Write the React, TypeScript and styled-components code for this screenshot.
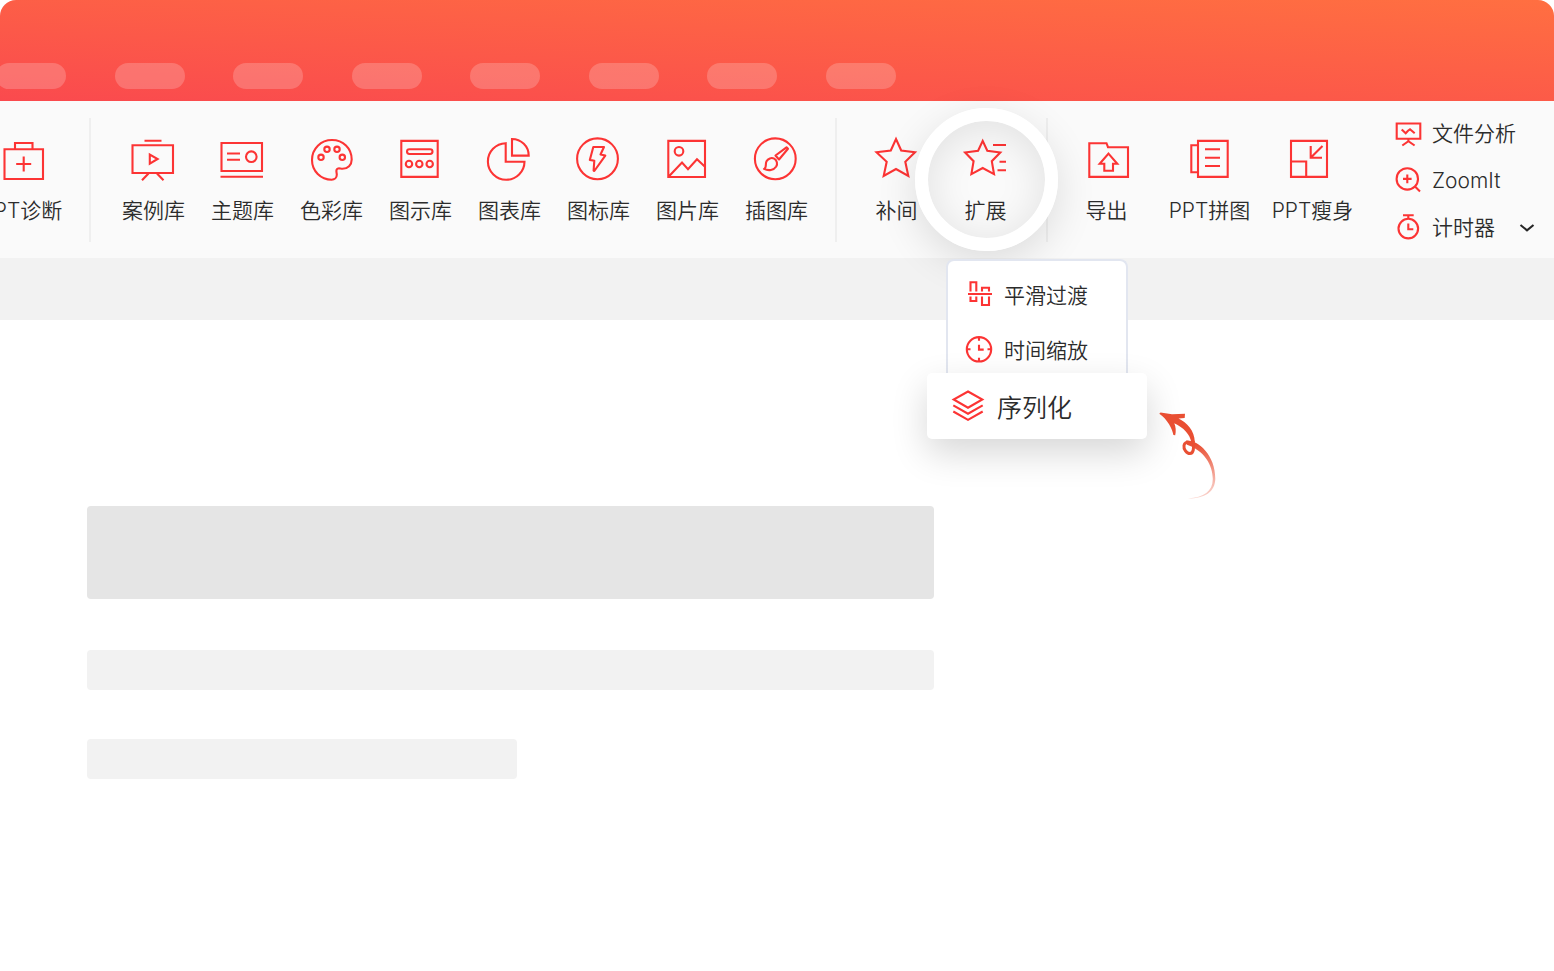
import React from "react";
import styled, { createGlobalStyle } from "styled-components";

const GlobalStyle = createGlobalStyle`
  *, *::before, *::after { box-sizing: border-box; }
  body {
    margin: 0;
    background: #fff;
    color: #2c2c2c;
    font-family: Inter, "Noto Sans CJK SC", sans-serif;
    font-weight: 350;
  }
  button {
    margin: 0;
    padding: 0;
    border: 0;
    background: none;
    color: inherit;
    font: inherit;
    cursor: pointer;
  }
`;

const Page = styled.div`
  min-height: 100vh;
  overflow-x: clip;
`;

const TitleBar = styled.header`
  height: 101px;
  padding-top: 63px;
  border-radius: 16px 16px 0 0;
  overflow: hidden;
  background: linear-gradient(3deg, #fa4a4e, #ff6f41);
`;

const TabStrip = styled.div`
  display: flex;
  justify-content: space-between;
  width: 900px;
  margin-left: -4px;
`;

const TabPill = styled.span`
  width: 70px;
  height: 26px;
  border-radius: 13px;
  background: rgba(255, 255, 255, 0.2);
`;

const Toolbar = styled.nav`
  display: flex;
  align-items: flex-start;
  height: 157px;
  background: #fafafa;
`;

const Group = styled.div<{ $before?: number; $after?: number }>`
  display: flex;
  flex: none;
  margin-left: ${(p) => p.$before ?? 0}px;
  margin-right: ${(p) => p.$after ?? 0}px;
`;

const Divider = styled.div`
  flex: none;
  width: 2px;
  height: 124px;
  margin-top: 17px;
  background: #efefef;
`;

const ToolButton = styled.button<{ $wide?: boolean }>`
  display: flex;
  flex-direction: column;
  align-items: center;
  gap: 13px;
  width: ${(p) => (p.$wide ? 103 : 89)}px;
  padding-top: 34px;
  font-size: 21px;
  line-height: 28px;
  white-space: nowrap;
`;

const Glyph = styled.svg`
  display: block;
  flex: none;
  overflow: visible;
  fill: none;
  stroke: #fc3434;
  stroke-width: 2.1;
`;

const Anchor = styled.div`
  position: relative;
`;

const Spotlight = styled.span`
  position: absolute;
  top: 7px;
  left: -26px;
  width: 143px;
  height: 143px;
  border: 13px solid #fff;
  border-radius: 50%;
  box-shadow: 0 12px 40px rgba(0, 0, 0, 0.12), inset 0 6px 40px rgba(0, 0, 0, 0.1);
  pointer-events: none;
`;

const Menu = styled.div`
  position: absolute;
  z-index: 2;
  top: 158px;
  left: 5px;
  width: 182px;
  padding-top: 5px;
  border: 2px solid #e2e6f0;
  border-bottom: 0;
  border-radius: 8px 8px 0 0;
  background: #fff;
`;

const MenuItem = styled.button`
  display: flex;
  align-items: center;
  gap: 8px;
  width: 100%;
  height: 55px;
  padding-left: 16px;
  font-family: "Noto Sans CJK SC", sans-serif;
  font-size: 21px;
  line-height: 28px;
`;

const ActiveMenuItem = styled(MenuItem)`
  position: relative;
  gap: 12px;
  width: 220px;
  height: 66px;
  margin: -3px -21px 0;
  padding-left: 24px;
  border-radius: 5px;
  background: #fff;
  box-shadow: 0 14px 36px rgba(0, 0, 0, 0.16);
  font-size: 25px;
  line-height: 36px;
`;

const Swirl = styled.svg`
  position: absolute;
  top: 139px;
  left: 202px;
  pointer-events: none;
`;

const SideTools = styled.div`
  flex: none;
  padding-top: 9px;
`;

const SideRow = styled.div`
  display: flex;
  align-items: center;
  gap: 24px;
  height: 47px;
`;

const SideButton = styled.button`
  display: flex;
  align-items: center;
  gap: 9px;
  font-size: 21px;
  line-height: 28px;
`;

const Chevron = styled(Glyph)`
  stroke: #262626;
`;

const SubBar = styled.div`
  height: 62px;
  background: #f2f2f2;
`;

const Canvas = styled.main`
  display: flex;
  flex-direction: column;
  padding: 186px 87px 0;
`;

const Block = styled.div<{ $height: number; $share: number; $gap?: number; $dark?: boolean }>`
  width: ${(p) => p.$share}%;
  height: ${(p) => p.$height}px;
  margin-bottom: ${(p) => p.$gap ?? 0}px;
  border-radius: 4px;
  background: ${(p) => (p.$dark ? "#e5e5e5" : "#f2f2f2")};
`;

function Icon({ size, children }: { size: number; children: React.ReactNode }) {
  return (
    <Glyph width={size} height={size} viewBox={`0 0 ${size} ${size}`} aria-hidden="true">
      {children}
    </Glyph>
  );
}

type Tool = { label: string; icon: React.ReactNode };

const diagnose: Tool = {
  label: "PPT诊断",
  icon: <path d="M7.5 14.3H46V44H7.5ZM18 14.3V8H35.5V14.3M26.7 21.5V36.5M19.2 29H34.2" />,
};

const libraries: Tool[] = [
  {
    label: "案例库",
    icon: (
      <path d="M3.5 10.3H44V38H3.5ZM15.5 5.8H32.5M19.5 38.5 13 45.3M28 38.5 34.5 45.3M20.8 19.6V28.6L28.6 24Z" />
    ),
  },
  {
    label: "主题库",
    icon: (
      <>
        <path d="M3.5 8H44V36H3.5ZM2.5 41.8H45M9 18.5H22M9 24.7H22" />
        <circle cx="33.3" cy="21.7" r="5.3" />
      </>
    ),
  },
  {
    label: "色彩库",
    icon: (
      <>
        <path d="M24.7 44.7C13.7 44.7 5 36 5 25 5 13.5 14 5 25 5c11 0 19.7 8 19.7 19.5 0 5.5-3.9 9.2-9.2 9.2-2 0-3.5-.7-4.9-.1-2.3 1-.9 3.4-.8 6.2 0 2.7-2.3 4.9-5.1 4.9Z" />
        <circle cx="14" cy="22.3" r="2.7" />
        <circle cx="20" cy="14.3" r="2.7" />
        <circle cx="30" cy="14.3" r="2.7" />
        <circle cx="35.3" cy="22.3" r="2.7" />
      </>
    ),
  },
  {
    label: "图示库",
    icon: (
      <>
        <path d="M5.3 5.9H41.7V41.9H5.3Z" />
        <rect x="11" y="14.2" width="25.5" height="4.8" rx="2.4" />
        <circle cx="13" cy="29" r="3.2" />
        <circle cx="23.3" cy="29" r="3.2" />
        <circle cx="33.7" cy="29" r="3.2" />
      </>
    ),
  },
  {
    label: "图表库",
    icon: (
      <path d="M20.7 8.2V26.7H39.5A18.3 18.3 0 1 1 20.7 8.2ZM27 4V20.6H43.7A16.7 16.6 0 0 0 27 4Z" />
    ),
  },
  {
    label: "图标库",
    icon: (
      <>
        <circle cx="23.5" cy="23.8" r="20.4" />
        <path
          strokeLinejoin="round"
          d="M19.3 12H30L26.5 19.5 31.3 20.6 20.3 36 19.6 35.6 20.3 25.7 15.8 24.9Z"
        />
      </>
    ),
  },
  {
    label: "图片库",
    icon: (
      <>
        <path d="M5.3 5.9H42V42H5.3ZM5.3 42 19 27.5 25 34.2 34 24.3 42 31.8" />
        <circle cx="16" cy="16.3" r="4.3" />
      </>
    ),
  },
  {
    label: "插图库",
    icon: (
      <>
        <circle cx="23.3" cy="23.8" r="20.4" />
        <path
          strokeLinejoin="round"
          d="M12 33.9C15 33 13 29 14.5 26.3 16 23.5 19.5 22.2 22.2 23.7 25 25.3 25.8 28.8 24.2 31.5 21.8 35.3 16.5 36 12 33.9ZM23.5 20.5 34.5 12.3 36 13.8 27 24.5Z"
        />
      </>
    ),
  },
];

const tween: Tool = {
  label: "补间",
  icon: (
    <path d="M24 4 29.2 15.5 43 17.3 33.3 26.8 36.3 40.9 24 34 11.7 40.9 14.7 26.8 4.5 17.3 18.8 15.5Z" />
  ),
};

const extend: Tool = {
  label: "扩展",
  icon: (
    <path d="M21.7 5.9 26.3 15.7 39.3 17.5 30.8 26.2 33 39.1 21.7 33 10.4 39.1 12.6 26.2 4.1 17.5 17.1 15.7ZM32 10H45M38.5 26.7H45M36.5 35.3H45" />
  ),
};

const outputs: Tool[] = [
  {
    label: "导出",
    icon: (
      <path d="M7.3 8.2H24.5L26 12.2H46V41.9H7.3ZM26.5 18.6 35.3 28.7H31V35.7H22.3V28.7H17.7Z" />
    ),
  },
  {
    label: "PPT拼图",
    icon: <path d="M13 5.9H42.7V41.9H13ZM13 10.2H6.3V37.3H13M20 14.3H35M20 22.7H35M20 31H35" />,
  },
  {
    label: "PPT瘦身",
    icon: <path d="M3 5.9H39V41.9H3ZM3 26.5H18.2V41.7M22.7 11V22.7H34M22.7 22.7 34.5 11" />,
  },
];

function ToolItem({ tool, wide }: { tool: Tool; wide?: boolean }) {
  return (
    <ToolButton type="button" $wide={wide}>
      <Icon size={49}>{tool.icon}</Icon>
      {tool.label}
    </ToolButton>
  );
}

function SwirlArrow() {
  return (
    <Swirl width="76" height="106" viewBox="0 0 76 106" aria-hidden="true">
      <defs>
        <linearGradient id="tail" gradientUnits="userSpaceOnUse" x1="0" y1="44" x2="0" y2="98">
          <stop offset="0" stopColor="#e94f33" />
          <stop offset="0.3" stopColor="#e94f33" stopOpacity="0.75" />
          <stop offset="0.7" stopColor="#e94f33" stopOpacity="0.4" />
          <stop offset="1" stopColor="#e94f33" stopOpacity="0.25" />
        </linearGradient>
      </defs>
      <path
        fill="#e94f33"
        d="M9.3 13.7 10.5 12.5 22 14.2 35 13.8 34.7 17.9 28.5 18.5C37 22.5 44.5 30.5 44.8 42L41.2 42C40.2 34.5 33.5 27.5 24.3 23.2 25.8 26.8 26.2 31.2 25.2 35.2L23.4 35C22.5 29.2 17.5 19.2 9.3 13.7Z"
      />
      <path
        fill="none"
        stroke="#e94f33"
        strokeWidth="3"
        d="M43.2 41C44.2 48 43.5 53.6 40 53.6 36.5 53.6 33.400 49 34 45.5 34.4 43 36.5 42 39 42.5"
      />
      <path
        fill="url(#tail)"
        d="M36 40.5C47 39.5 65.5 54 65.3 79 64.8 92 55 98.5 38 98.5 54 97.3 62.6 91.5 62.8 79 62.8 65.5 54.5 50.5 37 44.7Z"
      />
    </Swirl>
  );
}

function ExtendMenu() {
  return (
    <Menu>
      <MenuItem type="button">
        <Icon size={32}>
          <path d="M4 16H28M6.5 13.5V4.2H12.3V13.5M18 13.5V9.7H25V13.5M6.5 18.5V23H12.3V18.5M18 18.5V27H25V18.5" />
        </Icon>
        平滑过渡
      </MenuItem>
      <MenuItem type="button">
        <Icon size={32}>
          <circle cx="15" cy="16.3" r="12.2" />
          <path d="M15 4.3V7.8M15 24.8V28.3M3 16.3H6.5M23.5 16.3H27M15 11.8V16.6H19.7" />
        </Icon>
        时间缩放
      </MenuItem>
      <ActiveMenuItem type="button">
        <Icon size={34}>
          <path d="M17 2.5 31.3 10.5 17 18.7 2.7 10.5ZM2.3 16.3 17 24.7 31.7 16.3M2.3 22.5 17 30.9 31.7 22.5" />
        </Icon>
        序列化
      </ActiveMenuItem>
      <SwirlArrow />
    </Menu>
  );
}

export default function App() {
  return (
    <Page>
      <GlobalStyle />
      <TitleBar>
        <TabStrip>
          {Array.from({ length: 8 }, (_, i) => (
            <TabPill key={i} />
          ))}
        </TabStrip>
      </TitleBar>
      <Toolbar>
        <Group $before={-23} $after={23}>
          <ToolItem tool={diagnose} />
        </Group>
        <Divider />
        <Group $before={18} $after={14}>
          {libraries.map((tool) => (
            <ToolItem key={tool.label} tool={tool} />
          ))}
        </Group>
        <Divider />
        <Group $before={15} $after={16}>
          <ToolItem tool={tween} />
          <Anchor>
            <ToolItem tool={extend} />
            <Spotlight />
            <ExtendMenu />
          </Anchor>
        </Group>
        <Divider />
        <Group $before={7} $after={30}>
          {outputs.map((tool) => (
            <ToolItem key={tool.label} tool={tool} wide />
          ))}
        </Group>
        <SideTools>
          <SideRow>
            <SideButton type="button">
              <Icon size={29}>
                <path d="M2.7 4.5H26.3V19.7H2.7ZM7.7 10.5 11.7 14.3 14 11.7 16 10.3 20.7 14.3M8.3 26.5 14.4 22.2 20.6 26.5M14.4 19.5V22.5" />
              </Icon>
              文件分析
            </SideButton>
          </SideRow>
          <SideRow>
            <SideButton type="button">
              <Icon size={29}>
                <circle cx="13.3" cy="12.9" r="10.7" />
                <path d="M21 20.5 26 25.5M13.3 8.6V17.2M9 12.9H17.6" />
              </Icon>
              ZoomIt
            </SideButton>
          </SideRow>
          <SideRow>
            <SideButton type="button">
              <Icon size={29}>
                <circle cx="14.3" cy="15.6" r="9.8" />
                <path d="M9 2.3H19.7M14.3 2.3V5.6M14.3 10.5V16.3H19.3" />
              </Icon>
              计时器
            </SideButton>
            <button type="button" aria-label="更多">
              <Chevron width="16" height="10" viewBox="0 0 16 10" aria-hidden="true">
                <path d="M1.5 2 8 7.3 14.5 2" />
              </Chevron>
            </button>
          </SideRow>
        </SideTools>
      </Toolbar>
      <SubBar />
      <Canvas>
        <Block $height={93} $share={61.4} $gap={51} $dark />
        <Block $height={40} $share={61.4} $gap={49} />
        <Block $height={40} $share={31.15} />
      </Canvas>
    </Page>
  );
}
